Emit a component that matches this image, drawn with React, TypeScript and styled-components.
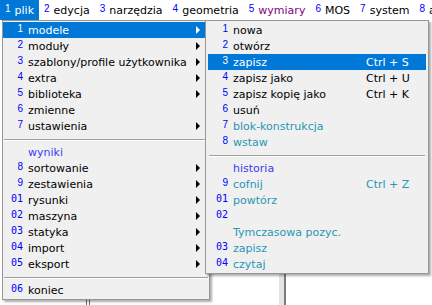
import React, { FC } from "react";
import styled, { createGlobalStyle } from "styled-components";

type Tone = "normal" | "teal" | "header";

type Entry =
  | { kind: "sep" }
  | {
      kind: "item";
      num?: string;
      label: string;
      tone?: Tone;
      arrow?: boolean;
      shortcut?: string;
      active?: boolean;
    };

const BLUE = "#0000ff";
const SELECT = "#0078d7";

const toneColor: Record<Tone, string> = {
  normal: "#000000",
  teal: "#2896b6",
  header: "#3c3cf2",
};

const GlobalStyle = createGlobalStyle`
  html, body {
    margin: 0;
    padding: 0;
    background: #ffffff;
  }
  body {
    font-family: "DejaVu Sans", Verdana, sans-serif;
    font-size: 11px;
    color: #000;
  }
`;

const Screen = styled.div`
  position: relative;
  width: 432px;
  height: 305px;
  overflow: hidden;
  background: #ffffff;
  display: flex;
  flex-direction: column;
`;

const MenuBar = styled.div`
  display: flex;
  flex: none;
  height: 20px;
  white-space: nowrap;
  background: #ffffff;
`;

const BarItem = styled.div<{ $active?: boolean; $color?: string }>`
  display: flex;
  align-items: baseline;
  padding: 2px 5px 0;
  line-height: 18px;
  color: ${p => (p.$active ? "#fff" : p.$color || "#000")};
  background: ${p => (p.$active ? SELECT : "transparent")};
`;

const BarNum = styled.span<{ $active?: boolean }>`
  position: relative;
  top: -2px;
  margin-right: 4px;
  font-family: "Liberation Sans", Arial, sans-serif;
  font-size: 10px;
  color: ${p => (p.$active ? "#fff" : BLUE)};
`;

const Workspace = styled.div`
  flex: 1;
  display: flex;
`;

const LeftPane = styled.div`
  flex: none;
  width: 86px;
`;

const PaneEdge = styled.div`
  flex: none;
  width: 4px;
  box-sizing: border-box;
  border-left: 1px solid #6a6a6a;
  border-right: 1px solid #6a6a6a;
`;

const MidPane = styled.div`
  flex: none;
  width: 189px;
`;

const Splitter = styled.div`
  flex: none;
  width: 7px;
  box-sizing: border-box;
  background: #e4e4e4;
  border-right: 2px solid #7c7c7c;
`;

const RightPane = styled.div`
  flex: 1;
`;

const Menu = styled.div`
  position: absolute;
  top: 20px;
  box-sizing: border-box;
  background: #f0f0f0;
  border: 1px solid #979797;
  box-shadow: 2px 2px 2px rgba(0, 0, 0, 0.32);
`;

const MainMenu = styled(Menu)`
  left: 2px;
  width: 208px;
  padding: 1px 0;
`;

const SubMenu = styled(Menu)`
  left: 205px;
  width: 224px;
  padding: 1px 2px;
`;

const Row = styled.div<{ $active?: boolean; $tone: Tone }>`
  display: flex;
  align-items: baseline;
  box-sizing: border-box;
  height: 16px;
  padding-top: 2px;
  line-height: 14px;
  white-space: nowrap;
  color: ${p => (p.$active ? "#fff" : toneColor[p.$tone])};
  background: ${p => (p.$active ? SELECT : "transparent")};
`;

const Num = styled.span<{ $active?: boolean; $mono?: boolean }>`
  flex: none;
  width: 20px;
  position: relative;
  top: -2px;
  text-align: right;
  font-family: ${p => (p.$mono ? `"DejaVu Sans Mono", monospace` : `"Liberation Sans", Arial, sans-serif`)};
  font-size: 10px;
  color: ${p => (p.$active ? "#fff" : BLUE)};
`;

const Label = styled.span`
  flex: 1;
  padding-left: 5px;
`;

const Shortcut = styled.span`
  flex: none;
  width: 60px;
`;

const Arrow = styled.span<{ $active?: boolean }>`
  flex: none;
  align-self: center;
  width: 0;
  height: 0;
  margin: -2px 9px 0 4px;
  border-top: 4px solid transparent;
  border-bottom: 4px solid transparent;
  border-left: 4px solid ${p => (p.$active ? "#fff" : "#000")};
`;

const Separator = styled.div`
  margin: 5px 1px 3px;
  border-top: 1px solid #a0a0a0;
  border-bottom: 1px solid #ffffff;
`;

const barItems = [
  { num: "1", label: "plik", active: true },
  { num: "2", label: "edycja" },
  { num: "3", label: "narzędzia" },
  { num: "4", label: "geometria" },
  { num: "5", label: "wymiary", color: "#800080" },
  { num: "6", label: "MOS" },
  { num: "7", label: "system" },
  { num: "8", label: "a" },
];

const mainEntries: Entry[] = [
  { kind: "item", num: "1", label: "modele", arrow: true, active: true },
  { kind: "item", num: "2", label: "moduły", arrow: true },
  { kind: "item", num: "3", label: "szablony/profile użytkownika", arrow: true },
  { kind: "item", num: "4", label: "extra", arrow: true },
  { kind: "item", num: "5", label: "biblioteka", arrow: true },
  { kind: "item", num: "6", label: "zmienne" },
  { kind: "item", num: "7", label: "ustawienia", arrow: true },
  { kind: "sep" },
  { kind: "item", label: "wyniki", tone: "header" },
  { kind: "item", num: "8", label: "sortowanie", arrow: true },
  { kind: "item", num: "9", label: "zestawienia", arrow: true },
  { kind: "item", num: "01", label: "rysunki", arrow: true },
  { kind: "item", num: "02", label: "maszyna", arrow: true },
  { kind: "item", num: "03", label: "statyka", arrow: true },
  { kind: "item", num: "04", label: "import", arrow: true },
  { kind: "item", num: "05", label: "eksport", arrow: true },
  { kind: "sep" },
  { kind: "item", num: "06", label: "koniec" },
];

const subEntries: Entry[] = [
  { kind: "item", num: "1", label: "nowa" },
  { kind: "item", num: "2", label: "otwórz" },
  { kind: "item", num: "3", label: "zapisz", shortcut: "Ctrl + S", active: true },
  { kind: "item", num: "4", label: "zapisz jako", shortcut: "Ctrl + U" },
  { kind: "item", num: "5", label: "zapisz kopię jako", shortcut: "Ctrl + K" },
  { kind: "item", num: "6", label: "usuń" },
  { kind: "item", num: "7", label: "blok-konstrukcja", tone: "teal" },
  { kind: "item", num: "8", label: "wstaw", tone: "teal" },
  { kind: "sep" },
  { kind: "item", label: "historia", tone: "header" },
  { kind: "item", num: "9", label: "cofnij", tone: "teal", shortcut: "Ctrl + Z" },
  { kind: "item", num: "01", label: "powtórz", tone: "teal" },
  { kind: "item", num: "02", label: "", tone: "teal" },
  { kind: "item", label: "Tymczasowa pozyc.", tone: "teal" },
  { kind: "item", num: "03", label: "zapisz", tone: "teal" },
  { kind: "item", num: "04", label: "czytaj", tone: "teal" },
];

const MenuEntries: FC<{ entries: Entry[]; withArrows?: boolean }> = ({ entries, withArrows }) => (
  <>
    {entries.map((e, i) => {
      if (e.kind === "sep") {
        return <Separator key={i} />;
      }
      return (
        <Row key={i} $active={e.active} $tone={e.tone || "normal"}>
          <Num $active={e.active} $mono={!!e.num && e.num.length > 1}>
            {e.num || ""}
          </Num>
          <Label>{e.label}</Label>
          {!withArrows ? <Shortcut>{e.shortcut || ""}</Shortcut> : null}
          {withArrows && e.arrow ? <Arrow $active={e.active} /> : null}
        </Row>
      );
    })}
  </>
);

const App: FC = () => (
  <>
    <GlobalStyle />
    <Screen>
      <MenuBar>
        {barItems.map(b => (
          <BarItem key={b.num} $active={b.active} $color={b.color}>
            <BarNum $active={b.active}>{b.num}</BarNum>
            {b.label}
          </BarItem>
        ))}
      </MenuBar>
      <Workspace>
        <LeftPane />
        <PaneEdge />
        <MidPane />
        <Splitter />
        <RightPane />
      </Workspace>

      <MainMenu>
        <MenuEntries entries={mainEntries} withArrows />
      </MainMenu>
      <SubMenu>
        <MenuEntries entries={subEntries} />
      </SubMenu>
    </Screen>
  </>
);

export default App;
